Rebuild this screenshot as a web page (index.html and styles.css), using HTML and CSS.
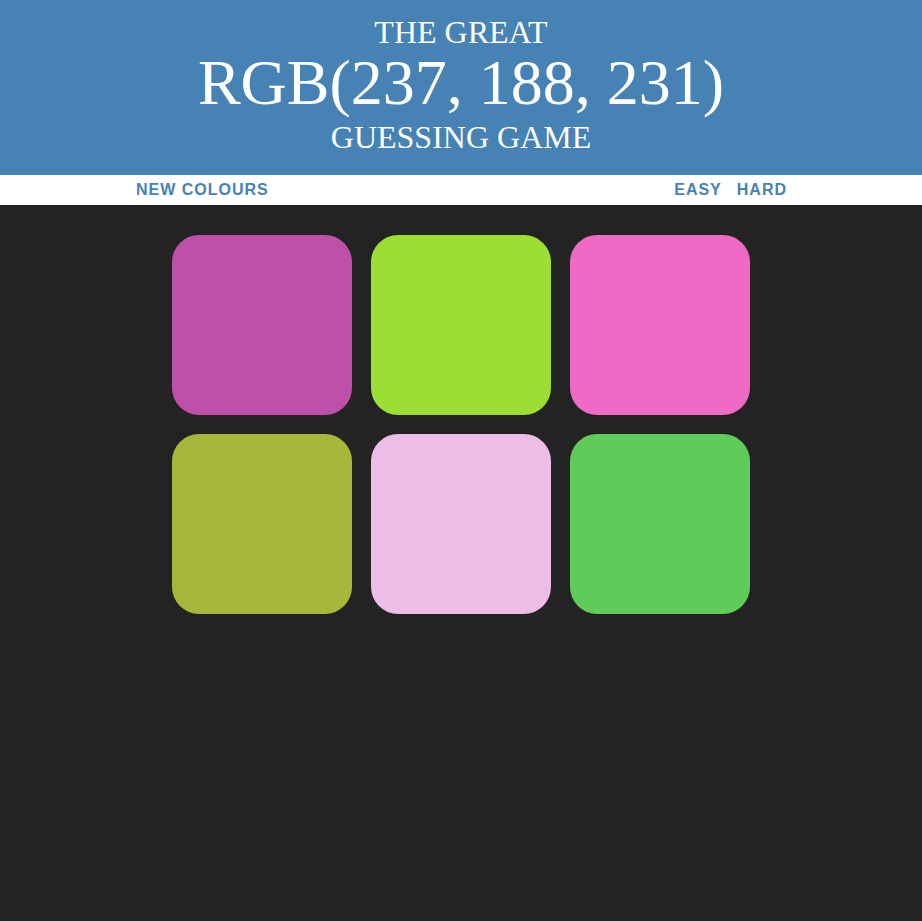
FILE: index.html
```html
<!DOCTYPE html>
<html lang="en">
<head>
<meta charset="utf-8">
<title>Colour Game</title>
<link rel="stylesheet" href="styles.css">
</head>
<body>
  <header class="header">
    <div class="title-small">THE GREAT</div>
    <div class="title-rgb">RGB(237, 188, 231)</div>
    <div class="title-small title-last">GUESSING GAME</div>
  </header>
  <nav class="stripe">
    <div class="stripe-inner">
      <button class="btn">New Colours</button>
      <div class="modes">
        <button class="btn">Easy</button>
        <button class="btn">Hard</button>
      </div>
    </div>
  </nav>
  <main class="board">
    <div class="square sq-1"></div>
    <div class="square sq-2"></div>
    <div class="square sq-3"></div>
    <div class="square sq-4"></div>
    <div class="square sq-5"></div>
    <div class="square sq-6"></div>
  </main>
</body>
</html>
```
FILE: styles.css
```css
html, body {
  margin: 0;
  padding: 0;
}
body {
  background: #232323;
  min-height: 921px;
  font-family: "Liberation Sans", Arial, sans-serif;
}
.header {
  background: #4682b4;
  color: #ffffff;
  text-align: center;
  font-family: "Liberation Serif", "Times New Roman", serif;
  font-weight: normal;
  padding: 12px 0 13px;
  height: 150px;
}
.title-small {
  font-size: 32px;
  line-height: 40px;
}
.title-rgb {
  font-size: 64px;
  line-height: 59px;
  padding-top: 1px;
}
.title-last {
  line-height: 50px;
}
.stripe {
  background: #ffffff;
  height: 30px;
}
.stripe-inner {
  width: 651px;
  margin-left: calc(50% - 325px);
  display: flex;
  justify-content: space-between;
  align-items: center;
  height: 30px;
}
.modes {
  display: flex;
  gap: 15px;
}
.btn {
  background: none;
  border: none;
  padding: 0;
  margin: 0;
  font-family: "Liberation Sans", Arial, sans-serif;
  font-size: 16px;
  font-weight: 700;
  letter-spacing: 1px;
  text-transform: uppercase;
  color: #4682b4;
  line-height: 30px;
  height: 30px;
  cursor: pointer;
}
.board {
  display: grid;
  grid-template-columns: repeat(3, 180px);
  grid-auto-rows: 180px;
  gap: 19px;
  justify-content: center;
  padding-top: 30px;
}
.square {
  border-radius: 27px;
}
.sq-1 { background: #bf50aa; }
.sq-2 { background: #9cde34; }
.sq-3 { background: #ee6ac4; }
.sq-4 { background: #a7b73c; }
.sq-5 { background: #edbce7; }
.sq-6 { background: #5fcc5a; }
```
